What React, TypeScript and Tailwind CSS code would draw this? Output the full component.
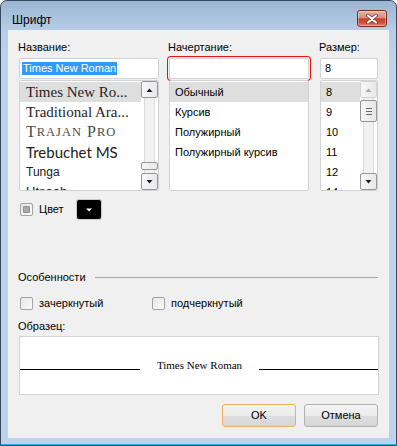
import React from "react";

const UI = "font-['Liberation_Sans',Arial,sans-serif]";

function Arrow({ dir, color }: { dir: "up" | "down"; color: string }) {
  return (
    <svg width="7" height="4" viewBox="0 0 7 4">
      {dir === "up" ? <path d="M0.5 4 L3.5 0.5 L6.5 4 Z" fill={color} /> : <path d="M0.5 0 L6.5 0 L3.5 3.5 Z" fill={color} />}
    </svg>
  );
}

function ScrollBtn({ dir, disabled }: { dir: "up" | "down"; disabled?: boolean }) {
  return (
    <div
      className={`h-[17px] w-[17px] shrink-0 rounded-[2px] border flex items-center justify-center bg-[linear-gradient(90deg,#f7f7f7,#e9e9e9)] ${
        disabled ? "border-[#d2d2d2]" : "border-[#979797]"
      }`}
    >
      <Arrow dir={dir} color={disabled ? "#a9a9a9" : "#202020"} />
    </div>
  );
}

function Track({ className }: { className?: string }) {
  return (
    <div className={`flex justify-center ${className ?? ""}`}>
      <div className="w-[11px] h-full border-x border-[#dcdcdc] bg-[#f1f1f1]" />
    </div>
  );
}

function Thumb({ h, grip }: { h: number; grip?: boolean }) {
  return (
    <div
      className="w-[17px] shrink-0 rounded-[2px] border border-[#979797] bg-[linear-gradient(90deg,#f7f7f7,#e6e6e6)] flex flex-col items-center justify-center gap-[2px]"
      style={{ height: h }}
    >
      {grip && (
        <>
          <div className="w-[6px] h-px bg-[#6a6a6a]" />
          <div className="w-[6px] h-px bg-[#6a6a6a]" />
          <div className="w-[6px] h-px bg-[#6a6a6a]" />
        </>
      )}
    </div>
  );
}

function Check({ indeterminate }: { indeterminate?: boolean }) {
  return (
    <div className="w-[13px] h-[13px] shrink-0 rounded-[2px] border border-[#a3a3a3] bg-[linear-gradient(135deg,#e6e6e6,#fbfbfb)] p-[2px]">
      {indeterminate && <div className="w-full h-full rounded-[1px] bg-[#a9a9a9] border border-[#8e8e8e]" />}
    </div>
  );
}

function Button({ label, focused }: { label: string; focused?: boolean }) {
  return (
    <div
      className={`w-[74px] h-[23px] rounded-[3px] border flex items-center justify-center text-[11px] text-black bg-[linear-gradient(180deg,#f3f3f3_0%,#ebebeb_50%,#dddddd_51%,#d7d7d7_100%)] ${
        focused ? "border-[#f0b060]" : "border-[#b2b2b2]"
      }`}
    >
      {label}
    </div>
  );
}

export default function App() {
  return (
    <div className={`w-[397px] h-[446px] ${UI} text-[11px] text-black`}>
      <div className="w-full h-full rounded-t-[7px] border border-[#37495f] bg-[linear-gradient(180deg,#9cb5d2_0px,#b6cee7_30px,#bbd3eb_60px,#bbd3eb_100%)] flex flex-col">
        {/* Title bar */}
        <div className="h-[29px] shrink-0 flex items-start justify-between pl-[11px] pr-[9px]">
          <span className="mt-[12px] text-[12px] leading-[14px] text-black">Шрифт</span>
          <div className="mt-[9px] w-[30px] h-[17px] rounded-[3px] border border-[#7d2a20] bg-[linear-gradient(180deg,#eab0a6_0%,#d98b7e_45%,#c4432e_52%,#c84c37_75%,#e18470_100%)] flex items-center justify-center shadow-[inset_0_0_0_1px_rgba(255,255,255,0.35)]">
            <svg width="12" height="10" viewBox="0 0 12 10">
              <path d="M2 1.5 L10 8.5 M10 1.5 L2 8.5" stroke="#6b2a22" strokeWidth="3.6" strokeLinecap="round" />
              <path d="M2 1.5 L10 8.5 M10 1.5 L2 8.5" stroke="#ffffff" strokeWidth="2.2" strokeLinecap="round" />
            </svg>
          </div>
        </div>

        {/* Client area */}
        <div className="mx-[7px] h-[408px] shrink-0 bg-[#f0f0f0] flex flex-col px-[11px] pt-[10px]">
          {/* Three columns */}
          <div className="flex">
            {/* Name */}
            <div className="w-[140px] flex flex-col">
              <div className="h-[14px] leading-[14px] -ml-px">Название:</div>
              <div className="mt-[4px] h-[21px] rounded-[2px] border border-[#cfd2d6] bg-white flex items-center pl-[2px]">
                <span className="bg-[#3399ff] text-white leading-[13px] h-[13px] px-px">Times New Roman</span>
              </div>
              <div className="mt-[1px] h-[111px] rounded-[2px] border border-[#cfd2d6] bg-white flex overflow-hidden">
                <div className="flex-1 pt-px overflow-hidden flex flex-col">
                  <div className="h-[20px] shrink-0 bg-[#dedede] pl-[6px] flex items-center font-['Liberation_Serif',serif] text-[15px] text-[#2a2420] whitespace-nowrap">
                    Times New Ro...
                  </div>
                  <div className="h-[20px] shrink-0 pl-[6px] flex items-center font-['Liberation_Serif',serif] text-[15px] text-[#2a2420] whitespace-nowrap">
                    Traditional Ara...
                  </div>
                  <div className="h-[20px] shrink-0 pl-[6px] flex items-center font-['Liberation_Serif',serif] text-[#4a4a4a] tracking-[0.09em] whitespace-nowrap">
                    <span className="text-[16px]">T</span>
                    <span className="text-[12.5px]">RAJAN</span>
                    <span className="text-[16px]">&nbsp;P</span>
                    <span className="text-[12.5px]">RO</span>
                  </div>
                  <div className="h-[20px] shrink-0 pl-[6px] flex items-center font-['Lato',sans-serif] text-[15px] text-[#202020] whitespace-nowrap">
                    Trebuchet MS
                  </div>
                  <div className="h-[20px] shrink-0 pl-[6px] flex items-center text-[12px] text-[#202020] whitespace-nowrap">
                    Tunga
                  </div>
                  <div className="h-[20px] shrink-0 pl-[6px] flex items-center text-[13px] text-[#202020] whitespace-nowrap">
                    Utsaah
                  </div>
                </div>
                <div className="w-[17px] flex flex-col">
                  <ScrollBtn dir="up" />
                  <Track className="flex-1" />
                  <Thumb h={8} />
                  <Track className="h-[3px]" />
                  <ScrollBtn dir="down" />
                </div>
              </div>
            </div>

            {/* Style */}
            <div className="w-[140px] ml-[10px] flex flex-col">
              <div className="h-[14px] leading-[14px] -ml-px">Начертание:</div>
              <div className="mt-[4px] h-[21px] rounded-[2px] border border-[#cfd2d6] bg-white ring-1 ring-[#e8100f] ring-offset-1 ring-offset-[#f0f0f0]" />
              <div className="mt-[1px] h-[111px] rounded-[2px] border border-[#cfd2d6] bg-white flex flex-col pt-px overflow-hidden">
                <div className="h-[20px] shrink-0 bg-[#dedede] pl-[5px] flex items-center">Обычный</div>
                <div className="h-[20px] shrink-0 pl-[5px] flex items-center">Курсив</div>
                <div className="h-[20px] shrink-0 pl-[5px] flex items-center">Полужирный</div>
                <div className="h-[20px] shrink-0 pl-[5px] flex items-center">Полужирный курсив</div>
              </div>
            </div>

            {/* Size */}
            <div className="w-[58px] ml-[11px] flex flex-col">
              <div className="h-[14px] leading-[14px] -ml-px">Размер:</div>
              <div className="mt-[4px] h-[21px] rounded-[2px] border border-[#cfd2d6] bg-white flex items-center pl-[4px]">8</div>
              <div className="mt-[1px] h-[111px] rounded-[2px] border border-[#cfd2d6] bg-white flex overflow-hidden">
                <div className="flex-1 pt-px overflow-hidden flex flex-col">
                  <div className="h-[20px] shrink-0 bg-[#dedede] pl-[5px] flex items-center">8</div>
                  <div className="h-[20px] shrink-0 pl-[5px] flex items-center">9</div>
                  <div className="h-[20px] shrink-0 pl-[5px] flex items-center">10</div>
                  <div className="h-[20px] shrink-0 pl-[5px] flex items-center">11</div>
                  <div className="h-[20px] shrink-0 pl-[5px] flex items-center">12</div>
                  <div className="h-[20px] shrink-0 pl-[5px] flex items-center">14</div>
                </div>
                <div className="w-[17px] flex flex-col">
                  <ScrollBtn dir="up" disabled />
                  <Track className="h-[2px]" />
                  <Thumb h={22} grip />
                  <Track className="flex-1" />
                  <ScrollBtn dir="down" />
                </div>
              </div>
            </div>
          </div>

          {/* Color row */}
          <div className="mt-[8px] h-[21px] flex items-center">
            <div className="ml-px">
              <Check indeterminate />
            </div>
            <span className="ml-[6px] w-[37px]">Цвет</span>
            <div className="w-[26px] h-[21px] rounded-[3px] border border-[#c9c9c9] bg-black flex items-center justify-center">
              <svg width="6" height="4" viewBox="0 0 6 4">
                <path d="M0 0.5 L6 0.5 L3 3.5 Z" fill="#ffffff" />
              </svg>
            </div>
          </div>

          {/* Features */}
          <div className="mt-[50px] h-[14px] flex items-center gap-[9px]">
            <span className="leading-[14px] -ml-px">Особенности</span>
            <div className="flex-1 h-px bg-[#a5a5a5]" />
          </div>
          <div className="mt-[13px] h-[13px] flex items-center">
            <div className="w-[132px] flex items-center gap-[6px] ml-px">
              <Check />
              <span>зачеркнутый</span>
            </div>
            <div className="flex items-center gap-[6px]">
              <Check />
              <span>подчеркнутый</span>
            </div>
          </div>

          <div className="mt-[9px] h-[14px] leading-[14px] -ml-px">Образец:</div>
          <div className="mt-[3px] h-[59px] w-[360px] border border-[#d3d3d3] bg-white flex flex-col">
            <div className="mt-[21px] flex items-start">
              <div className="w-[120px] mt-[11px] h-px bg-black" />
              <div className="flex-1 text-center font-['Liberation_Serif',serif] text-[11px] leading-[14px] text-black">
                Times New Roman
              </div>
              <div className="w-[119px] mt-[11px] h-px bg-black" />
            </div>
          </div>

          <div className="mt-[9px] flex justify-end gap-[8px]">
            <Button label="OK" focused />
            <Button label="Отмена" />
          </div>
        </div>
        <div className="flex-1" />
        <div className="h-px bg-[#2fb6d8]" />
      </div>
    </div>
  );
}
